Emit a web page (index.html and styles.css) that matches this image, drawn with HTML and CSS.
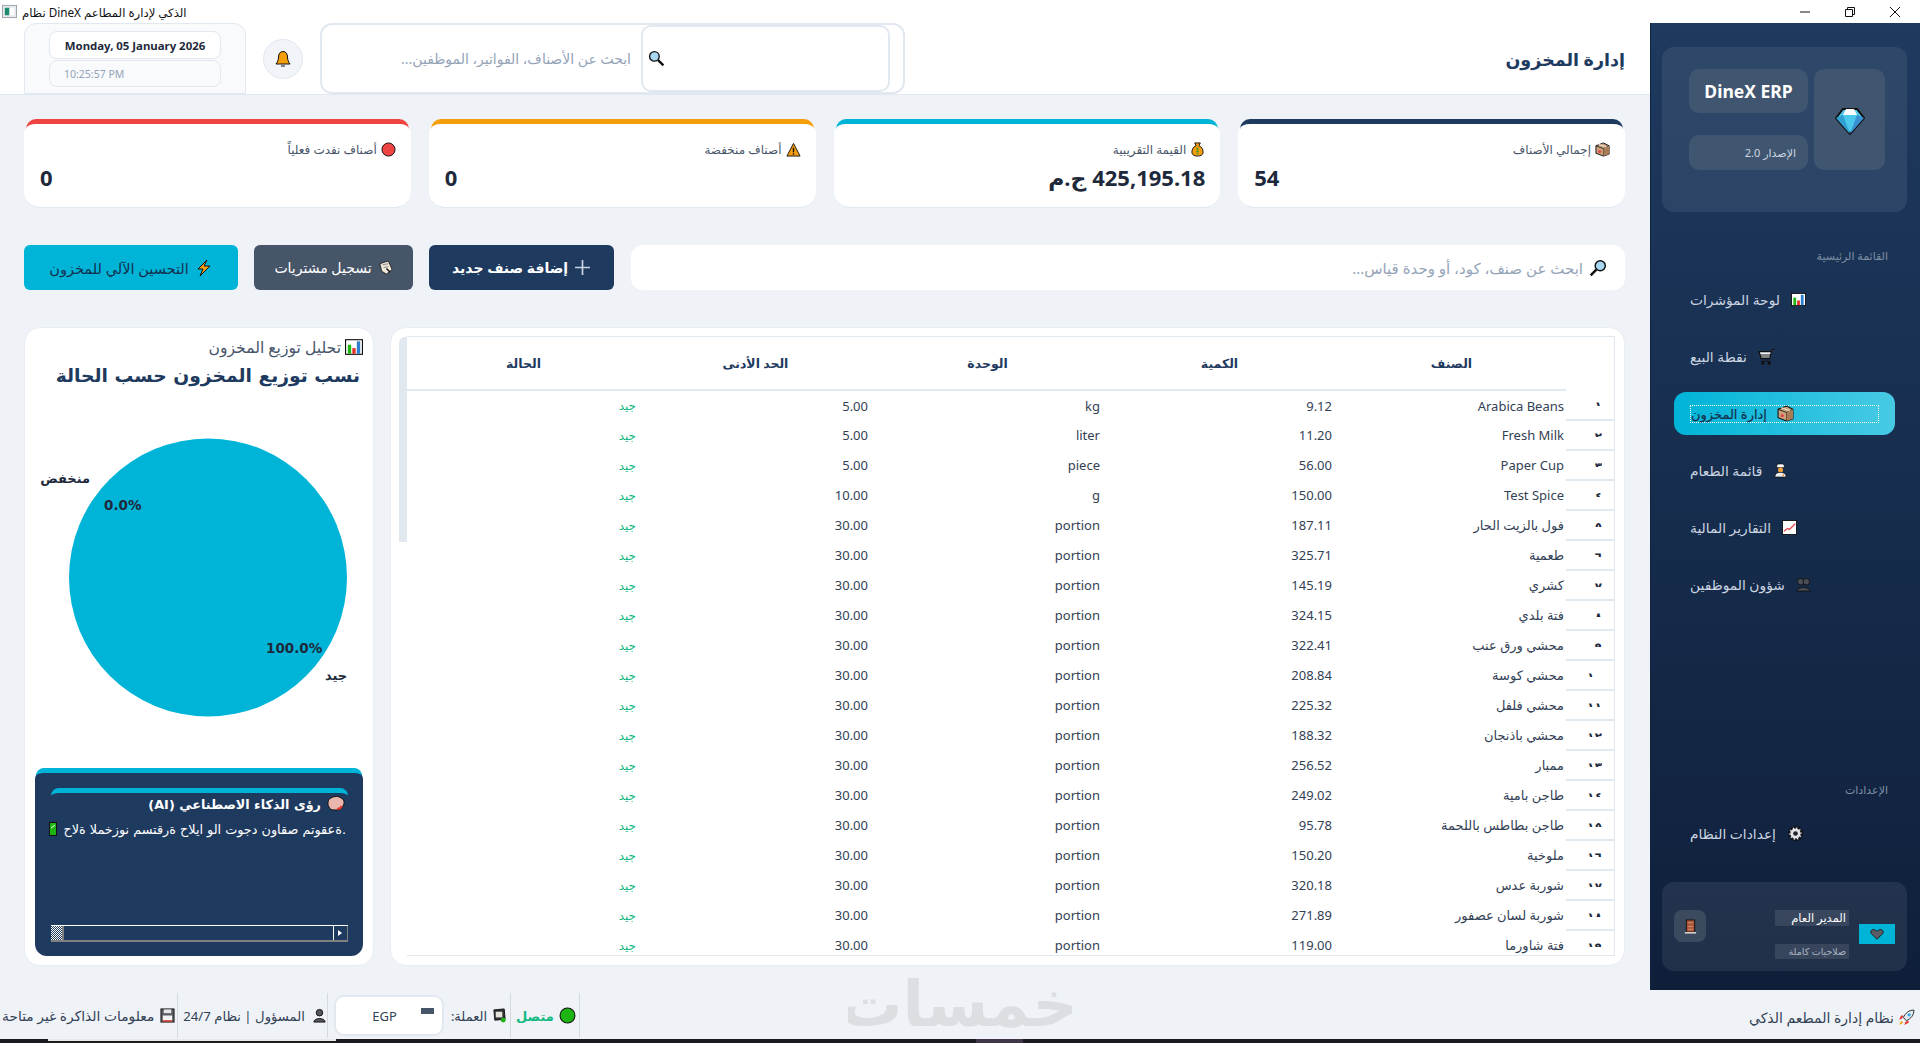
FILE: index.html
```html
<!DOCTYPE html>
<html lang="ar" dir="rtl">
<head>
<meta charset="utf-8">
<title>DineX</title>
<link rel="stylesheet" href="styles.css">
</head>
<body>
<svg class="sprite" aria-hidden="true">
  <symbol id="i-box" viewBox="0 0 16 16"><path d="M1 4 9 1l6 3v9l-6 2-8-3z" fill="#c9a27c" stroke="#111"/><path d="M1 4l8 3 6-3M9 7v8" fill="none" stroke="#111" stroke-width=".8"/><path d="M9 7l6-3v9l-6 2z" fill="#a97c55"/><circle cx="5" cy="10" r="1.6" fill="#e5484d"/><path d="M4 2.5l8 3" stroke="#e8d9c5" stroke-width="1.4"/></symbol>
  <symbol id="i-chart" viewBox="0 0 16 16"><rect x=".5" y="1.5" width="15" height="13" fill="#fff" stroke="#111"/><rect x="2.5" y="6" width="3" height="8" fill="#1db512"/><rect x="6.5" y="9" width="3" height="5" fill="#e5352b"/><rect x="10.5" y="3" width="3" height="11" fill="#2f7fd1"/></symbol>
  <symbol id="i-dot" viewBox="0 0 16 16"><circle cx="8" cy="8" r="7" fill="currentColor" stroke="#111"/></symbol>
</svg>
<div class="app">
  <div class="titlebar">
    <div class="winbtns">
      <svg class="winbtn" viewBox="0 0 12 12"><path d="M1 6h10" stroke="#111" fill="none"/></svg>
      <svg class="winbtn" viewBox="0 0 12 12"><path d="M1.5 3.5h7v7h-7zM3.5 3.5v-2h7v7h-2" stroke="#111" fill="none"/></svg>
      <svg class="winbtn" viewBox="0 0 12 12"><path d="M1 1l10 10M11 1 1 11" stroke="#111" fill="none"/></svg>
    </div>
    <div class="wintitle"><span>نظام DineX الذكي لإدارة المطاعم</span>
      <svg class="ico-15" viewBox="0 0 16 16"><rect x=".5" y="1.5" width="15" height="13" fill="#e7e9ec" stroke="#9aa0a6"/><rect x="3" y="4" width="5" height="8" fill="#1f8a70"/><rect x="8" y="4" width="5" height="8" fill="#fff"/></svg>
    </div>
  </div>

  <div class="main">
    <aside class="sidebar">
      <div class="brand">
        <div class="gem-box">
          <svg class="ico-30" viewBox="0 0 30 30"><path d="M8 4h14l7 9-14 16L1 13z" fill="#4cc8ec" stroke="#111" stroke-width="2"/><path d="M11 4h8l3 6H8z" fill="#fff"/><path d="M1 13l7-3 7 19z" fill="#2f9fd4"/><path d="M29 13l-7-3-7 19z" fill="#3a8fd0"/></svg>
        </div>
        <div class="brand-text">
          <div class="brand-name">DineX ERP</div>
          <div class="brand-ver">الإصدار 2.0</div>
        </div>
      </div>
      <div class="nav-label first">القائمة الرئيسية</div>
      <nav class="nav">
        <div class="nav-item"><span>لوحة المؤشرات</span><svg class="ico-15"><use href="#i-chart"/></svg></div>
        <div class="nav-item"><span>نقطة البيع</span>
          <svg class="ico-17" viewBox="0 0 16 16"><path d="M15.500 1l-2.500 1-2 8H3L1 3.500h11" fill="#eef2f6" stroke="#111" stroke-width="1.200"/><path d="M2 6.500h9.500M2.500 8.500H11M3 12.500h8.500" stroke="#111" fill="none"/><circle cx="4.500" cy="14.300" r="1.500" fill="#111"/><circle cx="10.500" cy="14.300" r="1.500" fill="#111"/></svg></div>
        <div class="nav-item active"><div class="focus"><span>إدارة المخزون</span><svg class="ico-17"><use href="#i-box"/></svg></div></div>
        <div class="nav-item"><span>قائمة الطعام</span>
          <svg class="ico-15" viewBox="0 0 16 16"><path d="M4 3a2 2 0 0 1 2-2h4a2 2 0 0 1 2 2v2H4z" fill="#fff" stroke="#111" stroke-width=".8"/><circle cx="8" cy="7.5" r="2.7" fill="#f2a33a"/><path d="M2 15c0-4 3-5 6-5s6 1 6 5z" fill="#eef1f4" stroke="#111" stroke-width=".8"/><circle cx="11" cy="13" r="1" fill="#f08c2e"/></svg></div>
        <div class="nav-item"><span>التقارير المالية</span>
          <svg class="ico-15" viewBox="0 0 16 16"><rect x=".5" y=".5" width="15" height="15" fill="#fff" stroke="#111"/><path d="M2 12l4-3 2 1 6-6" stroke="#e5484d" stroke-width="1.4" fill="none"/></svg></div>
        <div class="nav-item"><span>شؤون الموظفين</span>
          <svg class="ico-15" viewBox="0 0 16 16"><circle cx="5" cy="5" r="3.500" fill="#4a4c58" stroke="#111"/><circle cx="11" cy="5" r="3.500" fill="#4a4c58" stroke="#111"/><path d="M1 15c0-5 14-5 14 0z" fill="#4a4c58" stroke="#111"/></svg></div>
      </nav>
      <div class="nav-label lower">الإعدادات</div>
      <div class="nav-item single"><span>إعدادات النظام</span>
        <svg class="ico-17" viewBox="0 0 16 16"><circle cx="8" cy="8" r="6" fill="#dfe3e7" stroke="#111" stroke-width="2.400" stroke-dasharray="2.400 1.300"/><circle cx="8" cy="8" r="2.200" fill="#222"/></svg></div>
      <div class="user">
        <div class="user-heart">
          <svg class="ico-14" viewBox="0 0 16 16"><path d="M8 14 1.5 7.5C0 5 2 2.500 4.500 3 6 3.300 7 4 8 5c1-1 2-1.700 3.500-2C14 2.500 16 5 14.500 7.500z" fill="#5a5d66" stroke="#111"/></svg>
        </div>
        <div class="user-info">
          <div class="user-name">المدير العام</div>
          <div class="user-role">صلاحيات كاملة</div>
        </div>
        <div class="user-door">
          <svg class="ico-15" viewBox="0 0 16 16"><rect x="3.500" y="1" width="9" height="13" fill="#a8553a" stroke="#111"/><path d="M5.500 4h5M5.500 8h5M5.500 11h5" stroke="#e6a57f" stroke-width=".8"/><rect x="2" y="14" width="12" height="1.500" fill="#e9e6df"/></svg>
        </div>
      </div>
    </aside>

    <div class="content">
      <header class="topbar">
        <h1 class="page-title">إدارة المخزون</h1>
        <div class="top-tools">
          <div class="global-search">
            <div class="search-inner">
              <svg class="ico-17" viewBox="0 0 16 16"><circle cx="6" cy="6" r="4.500" fill="#a9d9f2" stroke="#111" stroke-width="1.300"/><path d="M9.500 9.500l5 5" stroke="#111" stroke-width="2.200"/></svg>
            </div>
            <span class="global-ph">ابحث عن الأصناف، الفواتير، الموظفين...</span>
          </div>
          <div class="bell">
            <svg class="ico-18" viewBox="0 0 16 18"><path d="M8 1.500c3 0 4.500 2.500 4.500 5.500 0 3 1 5 2.500 7H1c1.500-2 2.500-4 2.500-7 0-3 1.500-5.500 4.500-5.500z" fill="#f59e0b" stroke="#111"/><path d="M6 15.500h4v1H6z" fill="#111"/></svg>
          </div>
          <div class="dateblock">
            <div class="date-line">Monday, 05 January 2026</div>
            <div class="time-line">10:25:57 PM</div>
          </div>
        </div>
      </header>

      <div class="body">
        <section class="cards">
          <div class="card navy">
            <div class="card-label"><svg class="ico-15"><use href="#i-box"/></svg><span>إجمالي الأصناف</span></div>
            <div class="card-value ltr">54</div>
          </div>
          <div class="card cyan">
            <div class="card-label">
              <svg class="ico-15" viewBox="0 0 16 16"><path d="M5 1h6l-1.500 3c3 1 4.500 4 4.500 7 0 3-3 4-6 4s-6-1-6-4c0-3 1.500-6 4.500-7z" fill="#f59e0b" stroke="#111"/><path d="M8 6v7" stroke="#159a3a" stroke-width="2" stroke-dasharray="2 1"/></svg>
              <span>القيمة التقريبية</span></div>
            <div class="card-value">425,195.18 ج.م</div>
          </div>
          <div class="card amber">
            <div class="card-label">
              <svg class="ico-15" viewBox="0 0 16 16"><path d="M8 1.500 15 15H1z" fill="#f59e0b" stroke="#111"/><path d="M8 6v5M8 12v1.500" stroke="#111" stroke-width="1.500"/></svg>
              <span>أصناف منخفضة</span></div>
            <div class="card-value ltr">0</div>
          </div>
          <div class="card red">
            <div class="card-label"><svg class="ico-15 tone-red"><use href="#i-dot"/></svg><span>أصناف نفدت فعلياً</span></div>
            <div class="card-value ltr">0</div>
          </div>
        </section>

        <section class="actions">
          <div class="filter">
            <svg class="ico-18" viewBox="0 0 16 16"><circle cx="10" cy="6" r="4.500" fill="#a9d9f2" stroke="#111" stroke-width="1.300"/><path d="M6.500 9.500l-5 5" stroke="#111" stroke-width="2.200"/></svg>
            <span>ابحث عن صنف، كود، أو وحدة قياس...</span>
          </div>
          <button class="btn btn-navy"><svg class="ico-17" viewBox="0 0 16 16"><path d="M8 1v14M1 8h14" stroke="#cbd5e1" stroke-width="1.600"/></svg><span>إضافة صنف جديد</span></button>
          <button class="btn btn-gray"><svg class="ico-15" viewBox="0 0 16 16"><path d="M2 4l9-3 4 9-6 5-5-3z" fill="#efe7d8" stroke="#111" stroke-width=".8"/><path d="M5 5l6-1M6 8l5-1" stroke="#7a7a7a"/><path d="M9 9l4 4" stroke="#111" stroke-width="1.500"/></svg><span>تسجيل مشتريات</span></button>
          <button class="btn btn-cyan"><svg class="ico-18" viewBox="0 0 16 18"><path d="M11 1 2 10h5l-3 7 10-10H8z" fill="#f59e0b" stroke="#111"/></svg><span>التحسين الآلي للمخزون</span></button>
        </section>

        <section class="panels">
          <div class="table-panel">
            <div class="table-wrap">
              <table class="stock">
                <thead>
                  <tr><th class="corner"></th><th>الصنف</th><th>الكمية</th><th>الوحدة</th><th>الحد الأدنى</th><th>الحالة</th></tr>
                </thead>
                <tbody>
                  <tr><td class="rn"><b>١</b></td><td>Arabica Beans</td><td>9.12</td><td>kg</td><td>5.00</td><td class="ok">جيد</td></tr>
                  <tr><td class="rn"><b>٢</b></td><td>Fresh Milk</td><td>11.20</td><td>liter</td><td>5.00</td><td class="ok">جيد</td></tr>
                  <tr><td class="rn"><b>٣</b></td><td>Paper Cup</td><td>56.00</td><td>piece</td><td>5.00</td><td class="ok">جيد</td></tr>
                  <tr><td class="rn"><b>٤</b></td><td>Test Spice</td><td>150.00</td><td>g</td><td>10.00</td><td class="ok">جيد</td></tr>
                  <tr><td class="rn"><b>٥</b></td><td>فول بالزيت الحار</td><td>187.11</td><td>portion</td><td>30.00</td><td class="ok">جيد</td></tr>
                  <tr><td class="rn"><b>٦</b></td><td>طعمية</td><td>325.71</td><td>portion</td><td>30.00</td><td class="ok">جيد</td></tr>
                  <tr><td class="rn"><b>٧</b></td><td>كشري</td><td>145.19</td><td>portion</td><td>30.00</td><td class="ok">جيد</td></tr>
                  <tr><td class="rn"><b>٨</b></td><td>فتة بلدي</td><td>324.15</td><td>portion</td><td>30.00</td><td class="ok">جيد</td></tr>
                  <tr><td class="rn"><b>٩</b></td><td>محشي ورق عنب</td><td>322.41</td><td>portion</td><td>30.00</td><td class="ok">جيد</td></tr>
                  <tr><td class="rn"><b>١٠</b></td><td>محشي كوسة</td><td>208.84</td><td>portion</td><td>30.00</td><td class="ok">جيد</td></tr>
                  <tr><td class="rn"><b>١١</b></td><td>محشي فلفل</td><td>225.32</td><td>portion</td><td>30.00</td><td class="ok">جيد</td></tr>
                  <tr><td class="rn"><b>١٢</b></td><td>محشي باذنجان</td><td>188.32</td><td>portion</td><td>30.00</td><td class="ok">جيد</td></tr>
                  <tr><td class="rn"><b>١٣</b></td><td>ممبار</td><td>256.52</td><td>portion</td><td>30.00</td><td class="ok">جيد</td></tr>
                  <tr><td class="rn"><b>١٤</b></td><td>طاجن بامية</td><td>249.02</td><td>portion</td><td>30.00</td><td class="ok">جيد</td></tr>
                  <tr><td class="rn"><b>١٥</b></td><td>طاجن بطاطس باللحمة</td><td>95.78</td><td>portion</td><td>30.00</td><td class="ok">جيد</td></tr>
                  <tr><td class="rn"><b>١٦</b></td><td>ملوخية</td><td>150.20</td><td>portion</td><td>30.00</td><td class="ok">جيد</td></tr>
                  <tr><td class="rn"><b>١٧</b></td><td>شوربة عدس</td><td>320.18</td><td>portion</td><td>30.00</td><td class="ok">جيد</td></tr>
                  <tr><td class="rn"><b>١٨</b></td><td>شوربة لسان عصفور</td><td>271.89</td><td>portion</td><td>30.00</td><td class="ok">جيد</td></tr>
                  <tr><td class="rn"><b>١٩</b></td><td>فتة شاورما</td><td>119.00</td><td>portion</td><td>30.00</td><td class="ok">جيد</td></tr>
                </tbody>
              </table>
            </div>
            <div class="vscroll"><div class="vthumb"></div></div>
          </div>

          <div class="side-panel">
            <div class="side-head"><svg class="ico-18"><use href="#i-chart"/></svg><span>تحليل توزيع المخزون</span></div>
            <div class="chart-title">نسب توزيع المخزون حسب الحالة</div>
            <svg class="pie" viewBox="0 0 329 360">
              <circle cx="174" cy="182.500" r="139" fill="#00b4d8"/>
              <text class="pie-label" x="56" y="88" text-anchor="end">منخفض</text>
              <text class="pie-pct" x="70" y="115">0.0%</text>
              <text class="pie-pct" x="232" y="258">100.0%</text>
              <text class="pie-label" x="291" y="285">جيد</text>
            </svg>
            <div class="ai">
              <div class="ai-stripe"></div>
              <div class="ai-title">
                <svg class="ico-18" viewBox="0 0 18 16"><path d="M4 2c3-2 8-2 10 0 3 1 4 5 2 8-1 3-4 4-7 4S3 14 2 11C0 8 1 3 4 2z" fill="#e9b7ae" stroke="#111"/><path d="M10 13c2 0 4-1 5-3" stroke="#e5352b" stroke-width="2" fill="none"/></svg>
                <span>رؤى الذكاء الاصطناعي (AI)</span>
              </div>
              <div class="ai-body">
                <span class="ai-text">حالة المخزون مستقرة حاليا ولا توجد نواقص متوقعة.</span>
                <svg class="ai-check" viewBox="0 0 8 14"><rect x=".5" y=".5" width="7" height="13" fill="#1db512" stroke="#111"/><path d="M2 6l4-3" stroke="#fff"/></svg>
              </div>
              <div class="hscroll">
                <div class="hs-arrow"></div>
                <div class="hs-track"></div>
                <div class="hs-thumb"></div>
              </div>
            </div>
          </div>
        </section>
      </div>
    </div>
  </div>

  <footer class="status">
    <div class="st-app">
      <svg class="ico-17" viewBox="0 0 16 16"><path d="M15 1c-5 0-8 3-10 7l3 3c4-2 7-5 7-10z" fill="#dfe9f0" stroke="#111" stroke-width=".8"/><circle cx="10.500" cy="5.500" r="1.500" fill="#31a9e0"/><path d="M4 9l-3 1 2-4 2 0zM7 12l-1 3 4-2 0-2z" fill="#e5352b"/><path d="M3 11l-2 4 4-2z" fill="#f59e0b"/></svg>
      <span>نظام إدارة المطعم الذكي</span>
    </div>
    <div class="watermark">خمسات</div>
    <div class="st-group">
      <div class="st-item"><svg class="ico-17 tone-green"><use href="#i-dot"/></svg><span class="online">متصل</span></div>
      <div class="st-item">
        <svg class="ico-15" viewBox="0 0 16 16"><path d="M2 2l11-1 1 11-11 1z" fill="#333" stroke="#111"/><path d="M4 4h7v6H4z" fill="#e8e6dc"/><circle cx="12" cy="13" r="2.500" fill="#1db512"/></svg>
        <span>العملة:</span></div>
      <div class="combo"><span class="combo-arrow"></span><span class="combo-val">EGP</span></div>
      <div class="st-item wide">
        <svg class="ico-15" viewBox="0 0 16 16"><circle cx="8" cy="5" r="3.500" fill="#55565e" stroke="#111"/><path d="M2 15c0-5 12-5 12 0z" fill="#55565e" stroke="#111"/></svg>
        <span>المسؤول | نظام 24/7</span></div>
      <div class="st-item last">
        <svg class="ico-15" viewBox="0 0 16 16"><rect x="1" y="1" width="14" height="14" fill="#5a5d66" stroke="#111"/><rect x="4" y="1.500" width="8" height="4" fill="#e4e6ea"/><rect x="3" y="8" width="10" height="6" fill="#f4f4f4"/><rect x="3" y="13" width="10" height="1.500" fill="#e5352b"/></svg>
        <span>معلومات الذاكرة غير متاحة</span></div>
    </div>
  </footer>
  <div class="taskbar"><i class="task-a"></i><i class="task-b"></i></div>
</div>
</body>
</html>
```

FILE: styles.css
```css
* { box-sizing: border-box; }
html, body { margin: 0; height: 100%; }
body {
  font-family: "Noto Sans", "DejaVu Sans", sans-serif;
  background: #eff3f8;
  color: #1e293b;
  overflow: hidden;
}
.sprite { display: none; }
svg { flex: none; display: block; }
.ico-14 { width: 14px; height: 14px; }
.ico-15 { width: 15px; height: 15px; }
.ico-17 { width: 17px; height: 17px; }
.ico-18 { width: 18px; height: 18px; }
.ico-30 { width: 30px; height: 30px; }
.tone-red { color: #ef4444; }
.tone-green { color: #1db512; }

.app { width: 1920px; height: 1043px; display: flex; flex-direction: column; }

/* title bar */
.titlebar { height: 23px; background: #fff; display: flex; justify-content: space-between; align-items: center; padding: 0 3px 0 2px; flex: none; }
.winbtns { display: flex; gap: 33px; padding-right: 16px; direction: ltr; }
.winbtn { width: 12px; height: 12px; }
.wintitle { display: flex; align-items: center; gap: 5px; font-size: 11.700px; color: #111; direction: ltr; flex-direction: row-reverse; }
.wintitle span { direction: ltr; }

.main { flex: 1; display: flex; min-height: 0; height: 967px; }

/* sidebar */
.sidebar {
  width: 270px; flex: none; padding: 24px 13px 19px 11px;
  background: linear-gradient(180deg, #1e3a5f, #0f1f3a);
  display: flex; flex-direction: column;
  border-left: 1px solid #0f2440;
}
.brand { height: 165px; flex: none; background: rgba(255,255,255,.08); border-radius: 12px; padding: 22px 22px 0 0; display: flex; gap: 6px; }
.gem-box { width: 71px; height: 101px; border-radius: 10px; background: #40556f; display: flex; align-items: center; justify-content: center; }
.brand-text { width: 119px; display: flex; flex-direction: column; justify-content: space-between; height: 101px; }
.brand-name { height: 44px; border-radius: 10px; background: #40556f; color: #fff; font-weight: 700; font-size: 17.500px; display: flex; align-items: center; justify-content: center; }
.brand-ver { height: 35px; border-radius: 10px; background: #40556f; color: #cbd5e1; font-size: 11px; display: flex; align-items: center; padding-right: 12px; }
.nav-label { font-size: 11px; color: #7f8ea3; padding-right: 19px; height: 16px; line-height: 16px; flex: none; }
.nav-label.first { margin-top: 36px; }
.nav-label.lower { margin-top: 176px; }
.nav { display: flex; flex-direction: column; gap: 14px; margin-top: 14px; }
.nav-item { height: 43px; width: 221px; margin-right: 12px; border-radius: 12px; display: flex; flex: none; align-items: center; justify-content: flex-start; flex-direction: row-reverse; gap: 11px; padding-left: 16px; color: #cbd5e1; font-size: 13.800px; }
.nav-item.single { margin-top: 14px; }
.nav-item.active { background: linear-gradient(90deg, #00b4d8, #48cae4); color: #14304f; font-size: 13px; -webkit-text-stroke: .2px #14304f; padding: 0 16px; justify-content: stretch; }
.focus { flex: 1; height: 18px; border: 1px dotted #fff; display: flex; flex-direction: row-reverse; justify-content: flex-start; align-items: center; gap: 10px; }
.user { margin-top: auto; height: 89px; flex: none; background: rgba(255,255,255,.08); border-radius: 12px; display: flex; padding: 28px 12px 0; }
.user-heart { width: 36px; height: 20px; margin-top: 14px; background: #00b4d8; display: flex; align-items: center; justify-content: center; }
.user-info { width: 74px; margin-right: 10px; }
.user-name { height: 16px; background: rgba(255,255,255,.1); color: #fff; font-size: 11.500px; line-height: 16px; padding-right: 3px; }
.user-role { height: 15px; margin-top: 18px; background: rgba(255,255,255,.1); color: #aab4c2; font-size: 9.500px; line-height: 15px; padding-right: 3px; }
.user-door { width: 32px; height: 32px; margin-right: auto; border-radius: 8px; background: #3b4a5f; display: flex; align-items: center; justify-content: center; }

/* content */
.content { flex: 1; min-width: 0; display: flex; flex-direction: column; }
.topbar { height: 72px; flex: none; background: #fff; border-bottom: 1px solid #e2e8f0; display: flex; align-items: stretch; justify-content: space-between; padding: 0 25px 0 24px; }
.page-title { margin: 0; font-size: 17.500px; font-weight: 700; color: #1e3a5f; align-self: center; }
.top-tools { display: flex; gap: 17px; }
.global-search { width: 585px; height: 71px; border: 2px solid #e2e8f0; border-radius: 12px; background: #fff; display: flex; align-items: center; padding-right: 13px; }
.search-inner { width: 249px; height: 67px; border: 2px solid #e2e8f0; border-radius: 10px; display: flex; align-items: center; justify-content: flex-end; padding-left: 5px; background: #fff; }
.global-ph { font-size: 14px; color: #94a3b8; margin-right: 10px; }
.bell { width: 40px; height: 40px; border-radius: 50%; margin-top: 16px; background: #f1f5f9; border: 1px solid #e2e8f0; display: flex; align-items: center; justify-content: center; }
.dateblock { width: 222px; height: 71px; background: #f8fafc; border: 1px solid #e2e8f0; border-radius: 12px 12px 0 0; padding: 7px 24px 0; display: flex; flex-direction: column; gap: 1px; direction: ltr; }
.date-line { height: 28px; background: #fff; border: 1px solid #e2e8f0; border-radius: 8px; font-size: 11.400px; font-weight: 700; display: flex; align-items: center; justify-content: center; white-space: nowrap; color: #1e293b; }
.time-line { height: 27px; background: #f8fafc; border: 1px solid #e2e8f0; border-radius: 8px; font-size: 10.500px; color: #94a3b8; display: flex; align-items: center; padding-left: 14px; }

.body { flex: 1; min-height: 0; padding: 24px 25px 24px 24px; display: flex; flex-direction: column; gap: 37px; }

/* stat cards */
.cards { display: grid; grid-template-columns: repeat(4, 1fr); gap: 18px; height: 89px; flex: none; }
.card { position: relative; background: #fff; border-radius: 16px; border-bottom: 1px solid #e2e8f0; padding: 21px 15px 0 16px; }
.card::before { content: ""; position: absolute; inset: 0 2px auto; height: 10px; border-top: 5px solid; border-radius: 10px 10px 0 0; }
.navy::before { border-color: #1e3a5f; }
.cyan::before { border-color: #00b4d8; }
.amber::before { border-color: #f59e0b; }
.red::before { border-color: #ef4444; }
.card-label { display: flex; align-items: center; gap: 4px; font-size: 12px; color: #475569; height: 18px; }
.card-value { margin-top: 4px; font-size: 22px; line-height: 30px; font-weight: 700; color: #1e293b; }
.card-value.ltr { direction: ltr; }

/* actions */
.actions { display: flex; gap: 16px; height: 45px; flex: none; }
.filter { flex: 1; background: #fff; border-radius: 12px; margin-left: 1px; display: flex; align-items: center; gap: 6px; padding-right: 18px; font-size: 15px; color: #94a3b8; }
.btn { border: 0; border-radius: 6px; font: inherit; font-size: 14px; font-weight: 700; display: flex; align-items: center; justify-content: center; gap: 6px; color: #fff; }
.btn-navy { width: 185px; background: #1e3a5f; }
.btn-gray { width: 159px; background: #475569; font-weight: 400; }
.btn-cyan { width: 214px; background: #00b4d8; color: #14304f; font-weight: 400; font-size: 14.500px; }

/* panels */
.panels { flex: 1; min-height: 0; display: flex; gap: 16px; }
.table-panel { flex: 1; min-width: 0; background: #fff; border-radius: 16px; border: 1px solid #e8edf3; padding: 8px 9px 9px 8px; display: flex; }
.table-wrap { flex: 1; min-width: 0; height: 620px; overflow: hidden; border-top: 1px solid #e2e8f0; border-right: 1px solid #e2e8f0; border-bottom: 1px solid #e2e8f0; }
.stock { width: 1208px; border-collapse: collapse; table-layout: fixed; font-size: 13px; color: #334155; }
.stock th { height: 53px; font-size: 12.500px; font-weight: 700; color: #1e3a5f; border-bottom: 2px solid #e2e8f0; padding: 0 0 0 3px; }
.stock th.corner { width: 48px; border-bottom: 0; }
.stock td { height: 30px; padding: 0 2px 0 4px; text-align: right; }
.stock td.ok { color: #10b981; font-size: 12px; }
.stock td.rn { border-bottom: 2px solid #e2e8f0; padding: 0 12px 3px 0; }
.rn b { display: block; height: 6px; overflow: hidden; line-height: 12px; font-size: 12px; color: #1e293b; }
.vscroll { width: 8px; flex: none; margin-top: 1px; display: flex; flex-direction: column; }
.vthumb { height: 205px; background: #e2e8f0; border-radius: 6px 0 0 0; }

.side-panel { width: 350px; flex: none; background: #fff; border-radius: 16px; border: 1px solid #e8edf3; padding: 10px 10px 9px; display: flex; flex-direction: column; }
.side-head { display: flex; align-items: center; gap: 4px; font-size: 15.600px; color: #475569; height: 18px; }
.chart-title { margin-top: 7px; padding-right: 3px; height: 26px; font-family: "DejaVu Sans", sans-serif; font-size: 18.700px; font-weight: 700; color: #1e3a5f; line-height: 26px; white-space: nowrap; }
.pie { width: 329px; height: 360px; margin-top: 6px; overflow: visible; flex: none; direction: ltr; }
.pie-label { font-size: 13px; font-weight: 700; fill: #1e293b; font-family: "DejaVu Sans", sans-serif; }
.pie-pct { font-size: 13.500px; font-weight: 700; fill: #1e293b; font-family: "DejaVu Sans", sans-serif; }

.ai { margin-top: auto; height: 188px; position: relative; background: #1e3a5f; border-radius: 12px; padding: 20px 15px 0 16px; color: #fff; }
.ai::before { content: ""; position: absolute; inset: 0 1px auto; height: 9px; border-top: 5px solid #00b4d8; border-radius: 8px 8px 0 0; }
.ai-stripe { height: 8px; border-top: 5px solid #00b4d8; border-radius: 8px 8px 0 0; }
.ai-title { display: flex; align-items: center; gap: 6px; margin-top: -2px; padding-right: 3px; font-size: 12.800px; font-weight: 700; height: 20px; font-family: "DejaVu Sans", sans-serif; }
.ai-body { display: flex; align-items: center; height: 20px; margin-top: 5px; font-size: 12.800px; justify-content: space-between; gap: 6px; }
.ai-text { direction: ltr; unicode-bidi: bidi-override; white-space: nowrap; font-family: "DejaVu Sans", sans-serif; flex: 1; text-align: right; margin-right: 2px; }
.ai-check { width: 8px; height: 14px; }
.hscroll { margin-top: 86px; height: 17px; display: flex; border-top: 1px solid #fff; border-bottom: 2px solid #808080; }
.hs-thumb { width: 13px; background: repeating-conic-gradient(#fff 0 25%, #1e3a5f 0 50%) 0 0 / 2px 2px; border-right: 2px solid #808080; }
.hs-track { flex: 1; }
.hs-arrow { width: 15px; border-right: 1px solid #808080; border-left: 1px solid #fff; position: relative; }
.hs-arrow::after { content: ""; position: absolute; right: 5px; top: 4px; border: 3.500px solid transparent; border-left: 4px solid #fff; border-right: 0; }

/* status bar */
.status { height: 49px; flex: none; position: relative; display: flex; align-items: center; justify-content: space-between; padding: 0 5px 0 0; font-size: 13px; color: #334155; }
.st-app { display: flex; align-items: center; gap: 4px; margin-top: 5px; font-size: 14px; }
.st-group { display: flex; align-items: center; height: 45px; margin-top: 2px; }
.st-item { display: flex; align-items: center; gap: 5px; height: 45px; padding: 0 3px 0 5px; border-right: 1px solid #d5dae1; }
.st-item.wide { font-size: 13.200px; gap: 7px; padding: 0 0 0 5px; }
.st-item.last { padding: 0 2px 0 2px; gap: 6px; font-size: 13.800px; }
.online { color: #10b981; font-weight: 700; }
.combo { width: 110px; height: 41px; margin: 0 2px 0 6px; background: #fff; border: 2px solid #e2e8f0; border-radius: 10px; display: flex; align-items: center; direction: ltr; padding: 0 8px; flex-direction: row-reverse; justify-content: flex-start; position: relative; }
.combo-arrow { width: 13px; height: 6px; background: #475569; margin-top: -10px; }
.combo-val { margin-right: 24px; color: #334155; }
.watermark { position: absolute; left: 848px; top: -20px; font-family: "DejaVu Sans", sans-serif; font-size: 63px; font-weight: 700; line-height: 70px; color: #dcdfe2; width: 230px; text-align: center; overflow: hidden; white-space: nowrap; }

.taskbar { height: 4px; flex: none; background: #1b1b1f; display: flex; position: relative; direction: ltr; }
.task-a { margin-left: 48px; width: 288px; background: #e8e8e8; height: 2px; }
.task-b { margin-left: 640px; width: 47px; background: #403648; }
```
